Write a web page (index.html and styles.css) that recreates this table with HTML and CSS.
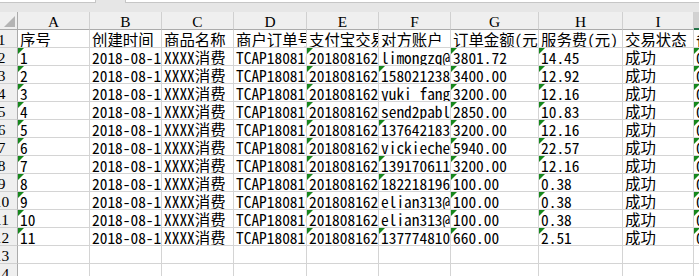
FILE: index.html
```html
<!DOCTYPE html>
<html lang="zh">
<head>
<meta charset="utf-8">
<title>Sheet</title>
<link rel="stylesheet" href="styles.css">
</head>
<body>
<div class="app">
  <div class="fbar">
    <div class="namebox"></div>
    <div class="fx"></div>
  </div>
  <div class="sheet">
    <div class="ch corner"><span class="tri"></span></div>
    <div class="ch">A</div><div class="ch">B</div><div class="ch">C</div><div class="ch">D</div><div class="ch">E</div><div class="ch">F</div><div class="ch">G</div><div class="ch">H</div><div class="ch">I</div><div class="ch sel">J</div>

    <div class="rh">1</div>
    <div class="c">序号</div>
    <div class="c">创建时间</div>
    <div class="c">商品名称</div>
    <div class="c">商户订单号</div>
    <div class="c">支付宝交易号</div>
    <div class="c">对方账户</div>
    <div class="c">订单金额(元)</div>
    <div class="c">服务费(元)</div>
    <div class="c">交易状态</div>
    <div class="c">备注</div>

    <div class="rh">2</div>
    <div class="c t">1</div><div class="c">2018-08-16 10:21:33</div><div class="c">XXXX消费</div><div class="c">TCAP180816000001</div><div class="c t">2018081621001004</div><div class="c">limongzq@163.com</div><div class="c t">3801.72</div><div class="c t">14.45</div><div class="c">成功</div><div class="c t">0.00</div>

    <div class="rh">3</div>
    <div class="c t">2</div><div class="c">2018-08-16 10:25:12</div><div class="c">XXXX消费</div><div class="c">TCAP180816000002</div><div class="c t">2018081621001005</div><div class="c t">15802123856</div><div class="c t">3400.00</div><div class="c t">12.92</div><div class="c">成功</div><div class="c t">0.00</div>

    <div class="rh">4</div>
    <div class="c t">3</div><div class="c">2018-08-16 10:31:40</div><div class="c">XXXX消费</div><div class="c">TCAP180816000003</div><div class="c t">2018081621001006</div><div class="c">yuki_fang@126.com</div><div class="c t">3200.00</div><div class="c t">12.16</div><div class="c">成功</div><div class="c t">0.00</div>

    <div class="rh">5</div>
    <div class="c t">4</div><div class="c">2018-08-16 10:44:08</div><div class="c">XXXX消费</div><div class="c">TCAP180816000004</div><div class="c t">2018081621001007</div><div class="c">send2pablo@qq.com</div><div class="c t">2850.00</div><div class="c t">10.83</div><div class="c">成功</div><div class="c t">0.00</div>

    <div class="rh">6</div>
    <div class="c t">5</div><div class="c">2018-08-16 10:52:19</div><div class="c">XXXX消费</div><div class="c">TCAP180816000005</div><div class="c t">2018081621001008</div><div class="c t">13764218390</div><div class="c t">3200.00</div><div class="c t">12.16</div><div class="c">成功</div><div class="c t">0.00</div>

    <div class="rh">7</div>
    <div class="c t">6</div><div class="c">2018-08-16 11:03:57</div><div class="c">XXXX消费</div><div class="c">TCAP180816000006</div><div class="c t">2018081621001009</div><div class="c">vickiechen@163.com</div><div class="c t">5940.00</div><div class="c t">22.57</div><div class="c">成功</div><div class="c t">0.00</div>

    <div class="rh">8</div>
    <div class="c t">7</div><div class="c">2018-08-16 11:15:26</div><div class="c">XXXX消费</div><div class="c">TCAP180816000007</div><div class="c t">2018081621001010</div><div class="c t">13917061125</div><div class="c t">3200.00</div><div class="c t">12.16</div><div class="c">成功</div><div class="c t">0.00</div>

    <div class="rh">9</div>
    <div class="c t">8</div><div class="c">2018-08-16 11:27:45</div><div class="c">XXXX消费</div><div class="c">TCAP180816000008</div><div class="c t">2018081621001011</div><div class="c t">18221819637</div><div class="c t">100.00</div><div class="c t">0.38</div><div class="c">成功</div><div class="c t">0.00</div>

    <div class="rh">10</div>
    <div class="c t">9</div><div class="c">2018-08-16 11:36:02</div><div class="c">XXXX消费</div><div class="c">TCAP180816000009</div><div class="c t">2018081621001012</div><div class="c">elian313@qq.com</div><div class="c t">100.00</div><div class="c t">0.38</div><div class="c">成功</div><div class="c t">0.00</div>

    <div class="rh">11</div>
    <div class="c t">10</div><div class="c">2018-08-16 11:41:18</div><div class="c">XXXX消费</div><div class="c">TCAP180816000010</div><div class="c t">2018081621001013</div><div class="c">elian313@qq.com</div><div class="c t">100.00</div><div class="c t">0.38</div><div class="c">成功</div><div class="c t">0.00</div>

    <div class="rh">12</div>
    <div class="c t">11</div><div class="c">2018-08-16 11:58:33</div><div class="c">XXXX消费</div><div class="c">TCAP180816000011</div><div class="c t">2018081621001014</div><div class="c t">13777481092</div><div class="c t">660.00</div><div class="c t">2.51</div><div class="c">成功</div><div class="c t">0.00</div>

    <div class="rh">13</div>
    <div class="c"></div><div class="c"></div><div class="c"></div><div class="c"></div><div class="c"></div><div class="c"></div><div class="c"></div><div class="c"></div><div class="c"></div><div class="c"></div>

    <div class="rh">14</div>
    <div class="c"></div><div class="c"></div><div class="c"></div><div class="c"></div><div class="c"></div><div class="c"></div><div class="c"></div><div class="c"></div><div class="c"></div><div class="c"></div>
  </div>
</div>
</body>
</html>
```

FILE: styles.css
```css
html, body {
  margin: 0;
  padding: 0;
  background: #e6e6e6;
  overflow: hidden;
}

.app {
  width: 699px;
  height: 276px;
  overflow: hidden;
  background: #e6e6e6;
}

.fbar {
  height: 3px;
  display: flex;
  margin-bottom: 9px;
}

.namebox {
  width: 95px;
  height: 2px;
  background: #fff;
  border-right: 1px solid #c6c6c6;
  border-bottom: 1px solid #c6c6c6;
}

.fx {
  flex: 1;
  margin-left: 29px;
  height: 2px;
  background: #fff;
  border-left: 1px solid #c6c6c6;
  border-bottom: 1px solid #c6c6c6;
}

.sheet {
  margin-left: -11px;
  display: grid;
  grid-template-columns: 29px 72px 72px 72px 73px 72px 72px 88px 84px 71px 60px;
  grid-auto-rows: 18px;
  font-family: "Noto Sans Mono CJK SC", "Noto Sans CJK SC", "Liberation Mono", monospace;
  font-size: 15.4px;
  color: #000;
}

.ch, .rh, .c {
  box-sizing: border-box;
  overflow: hidden;
  white-space: nowrap;
  position: relative;
}

.ch, .rh {
  font-family: "Liberation Serif", "Noto Sans CJK SC", serif;
  line-height: 20px;
  background: #efefef;
}

.ch {
  border-right: 1px solid #d0d0d0;
  border-bottom: 1px solid #ababab;
  text-align: center;
}

.ch.corner {
  border-right: 1px solid #ababab;
}

.ch.sel {
  background: #d2d2d2;
  border-bottom: 2px solid #217346;
}

.tri {
  position: absolute;
  right: 2px;
  bottom: 2px;
  width: 0;
  height: 0;
  border-left: 11px solid transparent;
  border-bottom: 11px solid #b4b4b4;
}

.rh {
  border-right: 1px solid #ababab;
  border-bottom: 1px solid #d0d0d0;
  text-align: center;
  padding-right: 3px;
}

.c {
  background: #fff;
  border-right: 1px solid #d4d4d4;
  border-bottom: 1px solid #d4d4d4;
  padding-left: 2px;
  line-height: 18px;
}

.c.t::before {
  content: "";
  position: absolute;
  left: 0;
  top: 0;
  width: 0;
  height: 0;
  border-top: 6px solid #16871c;
  border-right: 6px solid transparent;
}
```
